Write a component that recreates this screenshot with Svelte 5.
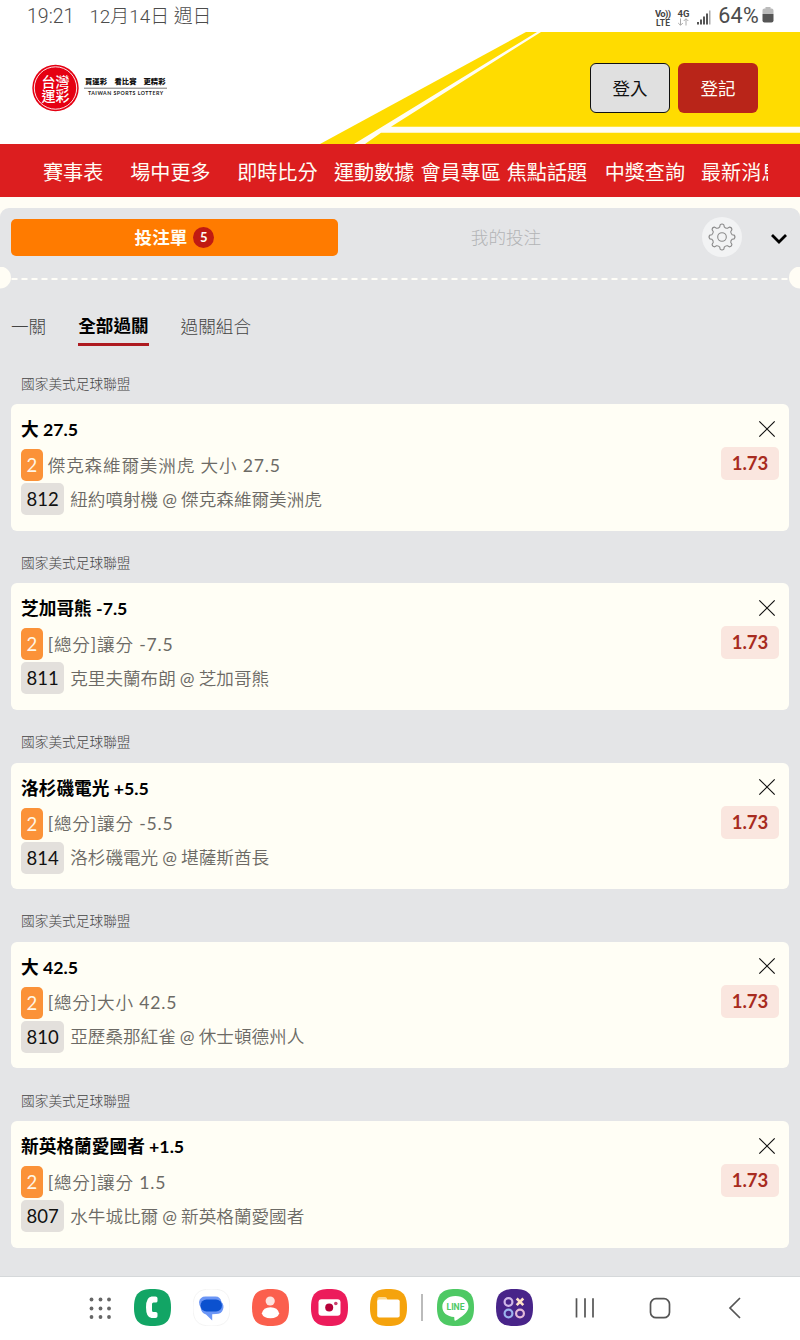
<script lang="ts">
  const league = '國家美式足球聯盟';

  const nav = [
    { label: '賽事表', gap: 0 },
    { label: '場中更多', gap: 27 },
    { label: '即時比分', gap: 26.5 },
    { label: '運動數據', gap: 16.5 },
    { label: '會員專區', gap: 6 },
    { label: '焦點話題', gap: 6 },
    { label: '中獎查詢', gap: 17.5 },
    { label: '最新消息', gap: 16 },
  ];

  let modes = ['一關', '全部過關', '過關組合'];
  let mode = $state(1);

  let bets = $state([
    { id: 812, pick: '大 27.5', market: '傑克森維爾美洲虎 大小 27.5', away: '紐約噴射機', home: '傑克森維爾美洲虎', odds: '1.73' },
    { id: 811, pick: '芝加哥熊 -7.5', market: '[總分]讓分 -7.5', away: '克里夫蘭布朗', home: '芝加哥熊', odds: '1.73' },
    { id: 814, pick: '洛杉磯電光 +5.5', market: '[總分]讓分 -5.5', away: '洛杉磯電光', home: '堪薩斯酋長', odds: '1.73' },
    { id: 810, pick: '大 42.5', market: '[總分]大小 42.5', away: '亞歷桑那紅雀', home: '休士頓德州人', odds: '1.73' },
    { id: 807, pick: '新英格蘭愛國者 +1.5', market: '[總分]讓分 1.5', away: '水牛城比爾', home: '新英格蘭愛國者', odds: '1.73' },
  ]);

  function removeBet(id: number) {
    bets = bets.filter((b) => b.id !== id);
  }

  const squircle = 'M18.5 0C32 0 37 5 37 18.5S32 37 18.5 37 0 32 0 18.5 5 0 18.5 0Z';

  // rounded eight-lobed cog, alternating rim and root radii
  function cogPath(teeth: number, outer: number, root: number) {
    const step = (Math.PI * 2) / teeth;
    const at = (r: number, a: number) => `${(20 + r * Math.sin(a)).toFixed(2)} ${(20 - r * Math.cos(a)).toFixed(2)}`;
    let d = '';
    for (let i = 0; i < teeth; i++) {
      const a = i * step;
      d += `${i ? 'L' : 'M'}${at(outer - 0.7, a - 0.15)}Q${at(outer + 0.8, a)} ${at(outer - 0.7, a + 0.15)}L${at(root, a + 0.22)}Q${at(root - 1.2, a + step / 2)} ${at(root, a + step - 0.22)}`;
    }
    return d + 'Z';
  }
</script>

<div class="screen">
  <div class="status">
    <span class="clock">19:21</span>
    <span class="date">12月14日 週日</span>
    <svg class="signals" width="60" height="24" viewBox="0 0 60 24">
      <text x="0" y="12" font-size="9.5" textLength="16">Vo))</text>
      <text x="1" y="21" font-size="8.5" textLength="14">LTE</text>
      <text x="22.5" y="11.5" font-size="9.5" textLength="12">4G</text>
      <path d="M25.500 13.500v6.500m-2.300-2 2.300 2.300 2.300-2.300M31 20.500v-6.500m-2.300 2 2.300-2.300 2.300 2.300" fill="none" stroke="#aaa" />
      <path d="M42 17h2v2.500h-2zM45 14.500h2v5h-2zM48 11.500h2v8h-2zM51 8.500h2v11h-2z" fill="#555" />
      <path d="M54 5.500h1.500v14h-1.500z" fill="#aaa" />
    </svg>
    <span class="percent">64%</span>
    <svg class="battery" width="12" height="18" viewBox="0 0 12 18">
      <path d="M3.500 1h5v1.500h1Q11.500 2.500 11.500 4.500V8H.5V4.500Q.5 2.500 2.500 2.500h1z" fill="#bbb" />
      <path d="M.5 8h11v6.500q0 2-2 2h-7q-2 0-2-2z" fill="#555" />
    </svg>
  </div>

  <header>
    <svg class="stripes" width="800" height="112" viewBox="0 0 800 112">
      <path d="M320 112 526 0H800V112Z" fill="#ffdc00" />
      <path d="M354 112 537 0H541L391 94.700H800V100.700H381L365 112Z" fill="#fffdf5" />
    </svg>
    <svg class="logo" width="140" height="48" viewBox="0 0 140 48">
      <circle cx="23.500" cy="24" r="23.200" fill="#e50012" />
      <circle cx="23.500" cy="24" r="21.200" fill="none" stroke="#fff" stroke-width=".9" />
      <g fill="#fff" font-size="14" font-weight="500">
        <text x="9.500" y="23">台灣</text>
        <text x="9.500" y="37">運彩</text>
      </g>
      <g fill="#111" font-size="7.300" font-weight="900">
        <text x="53" y="20" textLength="22">買運彩</text>
        <text x="82.500" y="20" textLength="22">看比賽</text>
        <text x="111.500" y="20" textLength="22">更精彩</text>
      </g>
      <path d="M52 24.200h83" stroke="#777" stroke-width="1" />
      <text class="latin" x="56" y="31" font-size="5.200" font-weight="700" fill="#222" textLength="75">TAIWAN SPORTS LOTTERY</text>
    </svg>
    <button class="login">登入</button>
    <button class="register">登記</button>
  </header>

  <nav>
    <div class="nav-track">
      {#each nav as item}
        <span class="nav-item" style="margin-left: {item.gap}px">{item.label}</span>
      {/each}
    </div>
  </nav>

  <main>
    <div class="toolbar">
      <button class="slip">投注單 <span class="count">{bets.length}</span></button>
      <button class="mine">我的投注</button>
      <button class="settings" aria-label="設定">
        <svg width="40" height="40" viewBox="0 0 40 40" fill="none" stroke="#8a8a8a" stroke-width="1.100" stroke-linejoin="round">
          <path d={cogPath(8, 13, 10.4)} />
          <circle cx="20" cy="20" r="4.300" />
        </svg>
      </button>
      <button class="collapse" aria-label="收合">
        <svg width="18" height="12" viewBox="0 0 18 12"><path d="m2 2 7 7 7-7" fill="none" stroke="#000" stroke-width="2.800" /></svg>
      </button>
    </div>

    <div class="perforation">
      <svg width="800" height="22" viewBox="0 0 800 22">
        <path d="M11.500 12H789" stroke="#fffef8" stroke-width="2" stroke-dasharray="6 4" />
        <circle cx="0" cy="10.500" r="11" fill="#fffdf5" />
        <circle cx="800" cy="10.500" r="11" fill="#fffdf5" />
      </svg>
    </div>

    <div class="modes">
      {#each modes as label, i}
        <button class="mode" class:active={mode === i} onclick={() => (mode = i)}>{label}</button>
      {/each}
    </div>

    {#each bets as bet (bet.id)}
      <section>
        <h2>{league}</h2>
        <div class="card">
          <div class="info">
            <div class="pick">{bet.pick}</div>
            <div class="line market"><span class="badge orange">2</span><span class="text">{bet.market}</span></div>
            <div class="line"><span class="badge">{bet.id}</span><span class="text teams">{bet.away} @ {bet.home}</span></div>
          </div>
          <div class="side">
            <button class="remove" aria-label="移除" onclick={() => removeBet(bet.id)}>
              <svg width="18" height="18" viewBox="0 0 18 18"><path d="m1.300 1.300 15.400 15.400m0-15.400L1.300 16.700" stroke="#111" stroke-width="1.200" /></svg>
            </button>
            <span class="odds">{bet.odds}</span>
          </div>
        </div>
      </section>
    {/each}
  </main>

  <footer>
    <svg class="apps" width="24" height="37" viewBox="0 0 24 37" fill="#666">
      {#each [10.5, 19.5, 28] as y}
        {#each [3.5, 12.5, 21] as x}
          <circle cx={x} cy={y} r="1.900" />
        {/each}
      {/each}
    </svg>
    <svg class="app" viewBox="0 0 37 37">
      <path d={squircle} fill="#12a565" />
      <path d="M17.500 7.500h4q2 0 2 1.800v2.600q0 1.600-1.800 1.600h-2.200q-1.500 0-1.500 1.600v6.300q0 1.600 1.500 1.600h2.200q1.800 0 1.800 1.600v2.600q0 1.800-2 1.800h-4Q12 28.500 12 18.300t5.500-10.800Z" fill="#fff" />
    </svg>
    <svg class="app" viewBox="0 0 37 37">
      <path d={squircle} fill="#fff" stroke="#f4f4f4" />
      <path d="M12.500 7.500h10q5 0 6 5.500 3 3 1.500 7.500-1.500 4.500-7 4.500-2.500 0-3.800.2V31.500L13 25.500Q8 24 7.500 18 6 15.500 6 13q1-5.500 6.500-5.500Z" fill="#6c96f5" />
      <rect x="7.500" y="10.500" width="21.500" height="12" rx="6" fill="#0b51cf" />
    </svg>
    <svg class="app" viewBox="0 0 37 37">
      <path d={squircle} fill="#fb5f4d" />
      <circle cx="18.200" cy="12" r="4.600" fill="#fde3df" />
      <path d="M9.800 24.500q1.500-6.300 8.700-6.300t8.700 6.300Q25.500 29.300 18.500 29.300T9.800 24.500Z" fill="#fff" />
    </svg>
    <svg class="app" viewBox="0 0 37 37">
      <path d={squircle} fill="#ec1c5b" />
      <rect x="7.500" y="10.200" width="22" height="16.500" rx="3" fill="#fff" />
      <circle cx="18.200" cy="18.500" r="4" fill="#b50039" />
      <circle cx="24.800" cy="14.500" r="1.800" fill="#c9406c" />
    </svg>
    <svg class="app" viewBox="0 0 37 37">
      <path d={squircle} fill="#f5a30d" />
      <path d="M7.300 10q0-2 2-2h6q1.700 0 2 2.500v4h-10z" fill="#fbd992" />
      <rect x="7.200" y="10.500" width="22.500" height="18" rx="2" fill="#fff" />
    </svg>
    <i class="divider"></i>
    <svg class="app line-app" viewBox="0 0 37 37">
      <path d={squircle} fill="#4ec964" />
      <path d="M18.500 7C26 7 31.500 11.800 31.500 17.700 31.500 23.500 24.500 28 18.300 31.800 17.200 32.200 17.500 30 17.200 28 10 27.500 5.300 23.500 5.300 17.700 5.300 11.800 11 7 18.500 7Z" fill="#fff" />
      <text x="9.500" y="20.600" font-size="8.600" font-weight="700" fill="#4ec964" textLength="18">LINE</text>
    </svg>
    <svg class="app" viewBox="0 0 37 37">
      <path d={squircle} fill="#482489" />
      <g fill="none" stroke-width="2.200">
        <circle cx="12.500" cy="13" r="3.900" stroke="#cfb7e8" />
        <path d="m20.700 9.500 6.600 6.600m0-6.600-6.600 6.600" stroke="#ffe2c8" stroke-width="2.600" />
        <circle cx="12.500" cy="24.500" r="3.900" stroke="#9bb4ee" />
        <circle cx="24" cy="24.500" r="3.900" stroke="#e2b9d8" />
      </g>
    </svg>
    <svg class="keys" width="170" height="37" viewBox="0 0 170 37" fill="none" stroke="#555" stroke-width="1.700">
      <path d="M2.500 9.300V28.500M11 9.300V28.500M19 9.300V28.500" />
      <rect x="76.500" y="9.700" width="19" height="19" rx="5.500" />
      <path d="M166 9 156 19l10 10" />
    </svg>
  </footer>
</div>

<style>
  :global(body) {
    margin: 0;
    background: #fffdf5;
  }

  .screen {
    width: 800px;
    height: 1340px;
    display: flex;
    flex-direction: column;
    overflow: hidden;
    font-family: Lato, 'Noto Sans CJK TC', sans-serif;
    background: #fffdf5;
  }

  button {
    border: none;
    padding: 0;
    background: none;
    font: inherit;
    color: inherit;
  }

  svg {
    display: block;
    flex: none;
  }

  .status {
    height: 32px;
    box-sizing: border-box;
    padding: 1px 26px 0 27px;
    display: flex;
    align-items: center;
    background: #fff;
    color: #4c4c4c;
    font: 300 19.5px/32px Roboto, 'Noto Sans CJK TC', sans-serif;
    white-space: nowrap;
  }

  .clock,
  .date {
    padding-top: 1px;
  }

  .date {
    margin-left: 15px;
    font-size: 18.9px;
  }

  .signals {
    margin: 0 3px 0 auto;
    fill: #444;
    font-family: Roboto, sans-serif;
    font-weight: 700;
  }

  .percent {
    font-size: 21.5px;
    font-weight: 400;
    letter-spacing: 0.3px;
    margin: -1px 3px 0 0;
  }

  .battery {
    margin-top: -3px;
  }

  header {
    position: relative;
    height: 112px;
    box-sizing: border-box;
    padding: 0 42px 0 32px;
    display: flex;
    align-items: center;
    gap: 8px;
    background: #fff;
  }

  .stripes {
    position: absolute;
    inset: 0;
  }

  .logo {
    position: relative;
    margin-right: auto;
    font-family: 'Noto Sans CJK TC', sans-serif;
  }

  .latin {
    font-family: Lato, sans-serif;
  }

  .login,
  .register {
    position: relative;
    width: 80px;
    height: 50px;
    box-sizing: border-box;
    padding-bottom: 2px;
    border-radius: 6px;
    font-size: 17.5px;
  }

  .login {
    border: 1px solid #111;
    background: #e0e0e0;
    color: #111;
  }

  .register {
    background: #b92519;
    color: #fffdf5;
  }

  nav {
    height: 53px;
    padding: 0 32px 0 43px;
    background: #dc1e1f;
    flex: none;
  }

  .nav-track {
    display: flex;
    overflow: hidden;
    font-size: 20.1px;
    line-height: 56px;
    height: 53px;
    color: #fffdf5;
    white-space: nowrap;
  }

  .nav-item {
    flex: none;
  }

  main {
    flex: 1;
    min-height: 0;
    margin-top: 11px;
    border-radius: 9px 9px 0 0;
    background: #e4e5e7;
  }

  .toolbar {
    display: flex;
    align-items: center;
    height: 37px;
    padding: 11px 12px 11px 11px;
  }

  .slip,
  .mine {
    width: 327px;
    height: 37px;
    display: flex;
    align-items: center;
    justify-content: center;
    gap: 6px;
    font-size: 17.6px;
    line-height: 39px;
  }

  .slip {
    border-radius: 5px;
    background: #ff7b00;
    color: #fffdf5;
    font-weight: 700;
  }

  .mine {
    width: 336px;
    color: #b3b4b6;
    font-weight: 300;
  }

  .count {
    width: 21px;
    height: 21px;
    border-radius: 50%;
    background: #c01a12;
    font-size: 13px;
    line-height: 21px;
    text-align: center;
  }

  .settings {
    margin: -2px 0 0 28px;
    border-radius: 50%;
    background: #f2f3f4;
  }

  .collapse {
    margin: 3px 0 0 auto;
  }

  .perforation {
    height: 22px;
  }

  .modes {
    display: flex;
    gap: 32px;
    align-items: flex-start;
    margin: 25px 0 0 11px;
  }

  .mode {
    height: 32px;
    box-sizing: border-box;
    padding-bottom: 7px;
    font-size: 17.6px;
    line-height: 25px;
    font-weight: 300;
    color: #444;
  }

  .mode.active {
    padding-bottom: 5px;
    border-bottom: 3px solid #ae1a20;
    font-weight: 700;
    color: #000;
    line-height: 24px;
  }

  section {
    height: 179.25px;
    box-sizing: border-box;
    padding: 0 11px;
  }

  h2 {
    height: 58px;
    box-sizing: border-box;
    margin: 0;
    padding: 27.5px 10px 0;
    font-size: 13.7px;
    line-height: 20px;
    font-weight: 300;
    color: #444;
  }

  .card {
    display: flex;
    justify-content: space-between;
    height: 126.5px;
    box-sizing: border-box;
    padding: 10px;
    border-radius: 6px;
    background: #fffef5;
  }

  .pick {
    font-size: 17.7px;
    line-height: 31px;
    height: 34px;
    font-weight: 700;
    color: #000;
  }

  .line {
    display: flex;
    align-items: center;
    gap: 6px;
    height: 34px;
    font-size: 17.6px;
    color: #6c6a65;
  }

  .text {
    padding-bottom: 2px;
    font-family: Lato, 'Noto Sans CJK TC DemiLight', 'Noto Sans CJK TC', sans-serif;
  }

  .teams {
    word-spacing: -0.4px;
  }

  .market {
    gap: 5px;
    letter-spacing: 0.83px;
  }

  .badge {
    height: 32px;
    box-sizing: border-box;
    padding: 0 5.500px;
    border-radius: 5px;
    background: #e3e0dc;
    color: #111;
    font-size: 18.5px;
    line-height: 32px;
    letter-spacing: 0;
  }

  .orange {
    background: #fb9238;
    color: #fff6e6;
  }

  .side {
    display: flex;
    flex-direction: column;
    align-items: flex-end;
    padding-top: 5.500px;
  }

  .remove {
    margin: 0 3px 9.500px 0;
  }

  .odds {
    width: 58px;
    border-radius: 5px;
    background: #fae6df;
    color: #a82b20;
    font-size: 18.5px;
    line-height: 33px;
    font-weight: 700;
    text-align: center;
  }

  footer {
    position: relative;
    height: 64px;
    box-sizing: border-box;
    padding: 12px 0 0 88px;
    display: flex;
    align-items: flex-start;
    border-top: 1px solid #d5d8da;
    background: #fff;
  }

  .app {
    width: 37px;
    height: 37px;
    margin-left: 22px;
  }

  .divider {
    width: 2px;
    height: 27px;
    margin: 5px 0 0 14px;
    background: #bbb;
  }

  .line-app {
    margin-left: 14px;
    font-family: Roboto, sans-serif;
  }

  .keys {
    margin-left: 41px;
  }
</style>
